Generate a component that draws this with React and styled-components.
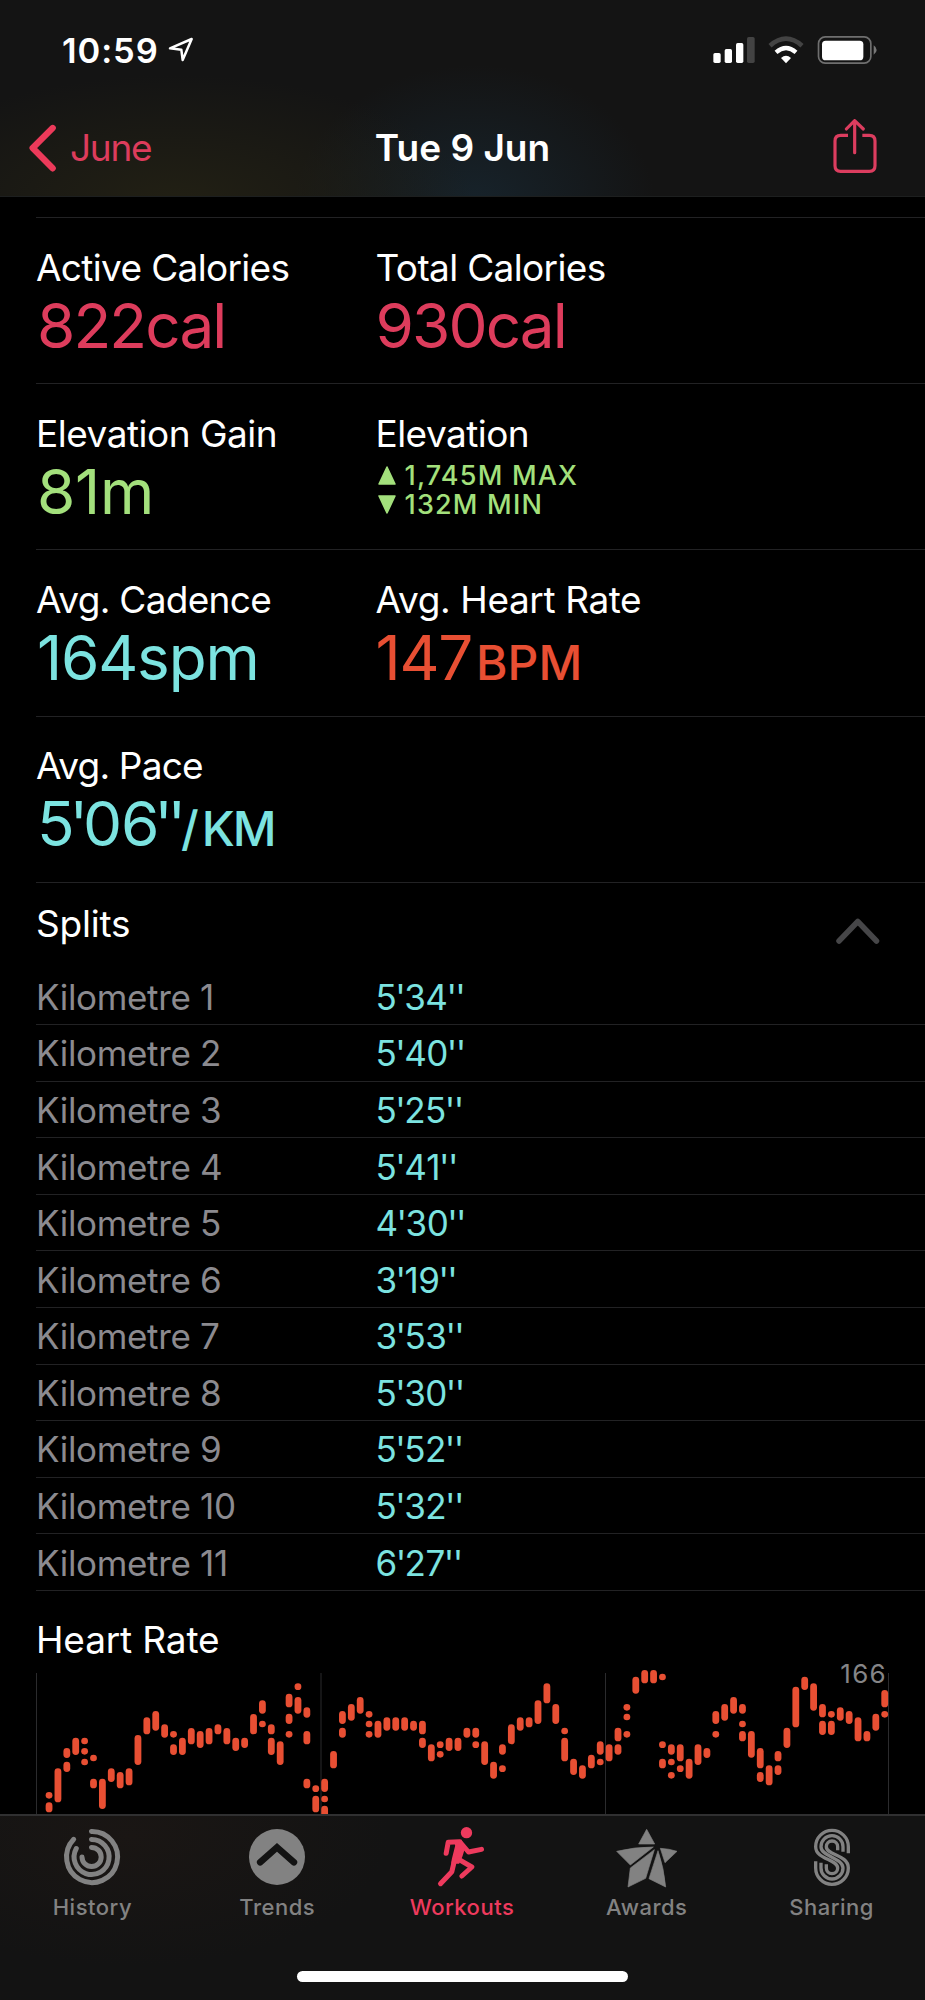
import React from "react";
import styled, { createGlobalStyle } from "styled-components";

const color = {
  pink: "#dd3c5c",
  pinkStrong: "#ee3a5d",
  green: "#a3e07c",
  teal: "#7ce3e0",
  orange: "#e84f33",
  muted: "#8b8a8f",
  line: "#222224",
  tab: "#828282",
};

const GlobalStyle = createGlobalStyle`
  * { box-sizing: border-box; }
  html, body { margin: 0; background: #000; }
  svg { display: block; overflow: visible; flex: none; }
`;

const Screen = styled.div`
  width: 925px;
  height: 2000px;
  display: flex;
  flex-direction: column;
  overflow: hidden;
  background: #000;
  color: #fff;
  font-family: Inter, "Liberation Sans", sans-serif;
`;

const Header = styled.header`
  height: 197px;
  flex: none;
  padding-top: 30px;
  border-bottom: 1px solid #1d1f1f;
  background:
    radial-gradient(ellipse 300px 130px at 175px 205px, #222014 0%, rgba(34, 32, 20, 0) 100%),
    radial-gradient(ellipse 180px 140px at 475px 205px, #17232b 0%, rgba(23, 35, 43, 0) 100%),
    #141414;
`;

const StatusBar = styled.div`
  display: flex;
  align-items: center;
  height: 40px;
  padding: 0 46px 0 62px;
`;

const Clock = styled.span`
  display: flex;
  align-items: center;
  gap: 9px;
  margin-right: auto;
  font-size: 34.5px;
  font-weight: 600;
  line-height: 41px;
  letter-spacing: 0.9px;
`;

const NavBar = styled.nav`
  display: grid;
  grid-template-columns: 1fr auto 1fr;
  align-items: center;
  height: 56px;
  margin-top: 49.5px;
`;

const BackLink = styled.a`
  display: flex;
  align-items: center;
  gap: 12px;
  margin: 0 auto 0 28px;
  color: ${color.pink};
  font-size: 37px;
  line-height: 44px;
  letter-spacing: -1.3px;
`;

const NavTitle = styled.h1`
  margin: 0;
  font-size: 37px;
  font-weight: 600;
  line-height: 44px;
`;

const ShareSlot = styled.div`
  justify-self: end;
  margin: -3px 48px 0 0;
`;

const Content = styled.main`
  flex: 1;
  min-height: 0;
  padding-top: 20px;
`;

const StatRow = styled.section`
  display: grid;
  grid-template-columns: 339.5px 1fr;
  height: 166.2px;
  margin-left: 36px;
  padding-top: 27.5px;
  border-top: 1px solid ${color.line};
`;

const Label = styled.div`
  font-size: 37px;
  line-height: 44px;
  white-space: nowrap;
  letter-spacing: ${(p) => p.$track || 0}px;
`;

const Value = styled.div`
  padding-left: ${(p) => p.$inset || 0}px;
  color: ${(p) => p.$color};
  font-size: 62px;
  line-height: 71px;
  white-space: nowrap;
  letter-spacing: ${(p) => p.$track || 0}px;
`;

const Unit = styled.span`
  font-size: 48px;
  font-weight: 500;
  margin-left: ${(p) => p.$gap || 0}px;
  letter-spacing: ${(p) => p.$track || 0}px;
`;

const Marked = styled.span`
  letter-spacing: -${(p) => p.$tight}em;
`;

const ElevationList = styled.div`
  padding: 5px 0 0 2px;
  color: ${color.green};
`;

const ElevationLine = styled.div`
  display: flex;
  align-items: center;
  gap: 9px;
  font-size: 27px;
  font-weight: 500;
  line-height: 29px;
  letter-spacing: 1.2px;
`;

const SplitsHeader = styled.div`
  display: flex;
  justify-content: space-between;
  height: 86.6px;
  margin-left: 36px;
  padding: 19.5px 45px 0 0;
  border-top: 1px solid ${color.line};
`;

const ChevronSlot = styled.div`
  padding-top: 14.5px;
`;

const SplitRow = styled.div`
  display: grid;
  grid-template-columns: 339.5px 1fr;
  height: 56.6px;
  margin-left: 36px;
  padding-top: 6.4px;
  border-bottom: 1px solid ${color.line};
  font-size: 35px;
  line-height: 44px;
  white-space: nowrap;
`;

const SplitName = styled.span`
  color: ${color.muted};
  letter-spacing: -0.33px;
`;

const SplitTime = styled.span`
  color: ${color.teal};
  letter-spacing: -0.4px;
`;

const HeartHeading = styled.div`
  height: 70.5px;
  padding: 27px 0 0 36px;
`;

const TabBar = styled.footer`
  position: relative;
  flex: none;
  height: 186px;
  display: grid;
  grid-template-columns: repeat(5, 184.8px);
  padding-top: 11px;
  border-top: 2px solid #303031;
  background:
    radial-gradient(ellipse 260px 130px at 130px 20px, #1a1614 0%, rgba(26, 22, 20, 0) 100%),
    #131313;
`;

const Tab = styled.a`
  display: flex;
  flex-direction: column;
  align-items: center;
  gap: 6px;
  color: ${(p) => (p.$active ? color.pinkStrong : color.tab)};
  font-size: 22px;
  font-weight: 500;
  line-height: 28px;
  letter-spacing: 0.5px;
`;

const HomeIndicator = styled.div`
  position: absolute;
  left: 297px;
  bottom: 18px;
  width: 331px;
  height: 11px;
  border-radius: 6px;
  background: #fff;
`;

const LocationArrow = () => (
  <svg width="26" height="26" viewBox="502 114 78 78">
    <path d="M508 148 L573 120 L546 183 L542 152 Z" fill="none" stroke="#fff" strokeWidth="7.5" strokeLinejoin="round" />
  </svg>
);

const StatusIcons = () => (
  <svg width="166.7" height="30" viewBox="750 105 500 90">
    <g fill="#fff">
      <rect x="754" y="159" width="22" height="30" rx="5" />
      <rect x="788" y="147" width="22" height="42" rx="5" />
      <rect x="822" y="129" width="22" height="60" rx="5" />
      <rect x="855" y="111" width="23" height="78" rx="5" fill="#434343" />
      <path d="M972 190 L957 174 Q972 160 987 174 Z" />
    </g>
    <path d="M942 157 Q972 131 1002 157" fill="none" stroke="#fff" strokeWidth="13" />
    <path d="M924 137 Q972 95 1020 137" fill="none" stroke="#434343" strokeWidth="14" />
    <rect x="1069.500" y="110.500" width="157" height="79" rx="20" fill="none" stroke="#6f6f6f" strokeWidth="5" />
    <rect x="1080" y="122" width="124" height="59" rx="11" fill="#fff" />
    <path d="M1235 136 Q1244 142 1244 150 Q1244 158 1235 164 Z" fill="#777" />
  </svg>
);

const BackChevron = () => (
  <svg width="30" height="48" viewBox="84 371 90 144">
    <path d="M158 383 L98 443 L158 504" fill="none" stroke="#ec3a5a" strokeWidth="19" strokeLinecap="round" strokeLinejoin="round" />
  </svg>
);

const ShareIcon = () => (
  <svg width="44" height="56" viewBox="1112 354 132 168">
    <g fill="none" stroke="#dc3d5f" strokeWidth="9.500" strokeLinecap="round" strokeLinejoin="round">
      <path d="M1177 362 V458 M1152 387 L1177 362 L1203 387" />
      <path strokeLinecap="butt" d="M1157 406 H1135 Q1118 406 1118 423 V497 Q1118 514 1135 514 H1221 Q1238 514 1238 497 V423 Q1238 406 1221 406 H1200" />
    </g>
  </svg>
);

const CollapseChevron = () => (
  <svg width="44" height="28" viewBox="836 917 44 28">
    <path d="M839 941 L857.800 921.500 L876.500 941" fill="none" stroke="#464648" strokeWidth="5.500" strokeLinecap="round" strokeLinejoin="round" />
  </svg>
);

const Triangle = ({ down }) => (
  <svg width="18" height="19" viewBox="0 0 18 19">
    <path d={down ? "M1 1 H17 L9 18 Z" : "M9 1 L17 18 H1 Z"} fill={color.green} stroke={color.green} strokeWidth="1.500" strokeLinejoin="round" />
  </svg>
);

const HistoryIcon = () => (
  <svg width="64" height="60" viewBox="60 1827 64 60">
    <g fill="none" stroke="currentColor" strokeWidth="5" strokeLinecap="round">
      <path d="M91.500 1831.500 A25.500 25.500 0 1 1 73.700 1839.300" />
      <path d="M91.500 1839.500 A17.500 17.500 0 1 1 76.300 1848.500" />
      <path d="M91.500 1847.400 A9.600 9.600 0 1 1 82 1857" />
    </g>
  </svg>
);

const TrendsIcon = () => (
  <svg width="64" height="60" viewBox="245.300 1827 64 60">
    <circle cx="277.300" cy="1857" r="28" fill="currentColor" />
    <path d="M260.500 1862.300 L277.300 1847.300 L294.200 1862.300" fill="none" stroke="#131313" strokeWidth="6.600" strokeLinecap="round" />
  </svg>
);

const RunnerIcon = () => (
  <svg width="64" height="60" viewBox="16.500 36 192 180">
    <circle cx="126" cy="53" r="17" fill="currentColor" />
    <path d="M88 75 L110 75 L122 98 L114 124 L104 146 L80 146 L82 132 L92 92 Z" fill="currentColor" />
    <g fill="none" stroke="currentColor" strokeWidth="15" strokeLinecap="round" strokeLinejoin="round">
      <path d="M65 115 L71 82 L106 80" />
      <path d="M109 84 L132 111 L171 103" />
      <path d="M90 136 L82 170 L48 206" />
      <path d="M104 134 L142 156 L112 183" />
    </g>
  </svg>
);

const AwardsIcon = () => (
  <svg width="64" height="60" viewBox="458 81 192 180">
    <g fill="currentColor" stroke="currentColor" strokeWidth="2" strokeLinejoin="round">
      <path d="M553 88 L577 132 L529 132 Z" />
      <path d="M463 154 Q515 141 573 141 L504 195 Z" />
      <path d="M576 149 L550 235 L497 261 L504 204 Z" />
      <path d="M587 152 Q605 205 610 261 L560 236 Z" />
      <path d="M594 145 Q620 146 644 154 L608 188 Z" />
    </g>
  </svg>
);

const SharingIcon = () => (
  <svg width="64" height="60" viewBox="1011 81 192 180">
    <g fill="none" stroke="currentColor" strokeWidth="10">
      <path d="M1156 160 V140 A49 49 0 0 0 1058 140 C1058 179 1124 177 1124 204 A17 17 0 0 1 1090 204 V193" />
      <path d="M1140 155 V140 A33 33 0 0 0 1074 140 C1074 170 1140 173 1140 204 A33 33 0 0 1 1074 204 V188" />
      <path d="M1124 151 V140 A17 17 0 0 0 1090 140 C1090 166 1156 164 1156 204 A49 49 0 0 1 1058 204 V184" />
    </g>
  </svg>
);

/* One entry per time slot; each slot holds [top, bottom] ranges in thirds of a pixel. */
const heartSamples = [
  [[516, 536], [547, 577]], [[445, 547]], [[384, 414], [425, 456]], [[353, 405]],
  [[353, 373], [384, 404], [416, 436]], [[404, 424], [476, 505]], [[476, 567]], [[445, 486]],
  [[456, 505]], [[445, 496]], [[345, 435]], [[292, 343]], [[273, 332]], [[313, 353]],
  [[333, 353], [373, 405]], [[353, 405]], [[324, 373]], [[333, 384]], [[324, 373]], [[313, 343]],
  [[324, 373]], [[353, 393]], [[353, 384]], [[282, 343]], [[241, 281], [302, 322]],
  [[313, 343], [353, 405]], [[364, 435]], [[221, 262], [281, 312], [333, 353]],
  [[190, 210], [231, 281]], [[262, 293], [333, 373], [476, 505]], [[496, 516], [527, 577]],
  [[476, 516], [527, 547], [557, 600]], [[393, 445]], [[273, 312], [323, 353]], [[252, 302]],
  [[231, 281]], [[273, 293], [302, 322], [333, 353]], [[302, 353]], [[292, 332]], [[292, 332]],
  [[292, 332]], [[302, 332]], [[302, 343], [353, 384]], [[373, 424]], [[364, 384], [393, 413]],
  [[353, 393]], [[353, 393]], [[323, 353]], [[323, 353], [364, 384]], [[364, 435]], [[425, 476]],
  [[373, 404], [436, 456]], [[313, 373]], [[292, 332]], [[292, 322]], [[241, 312]], [[190, 250]],
  [[252, 312]], [[323, 343], [353, 424]], [[416, 465]], [[436, 476]], [[404, 445]],
  [[364, 404], [416, 436]], [[373, 424]], [[323, 364], [373, 404]],
  [[252, 272], [281, 301], [333, 353]], [[170, 221]], [[150, 190]], [[150, 190]],
  [[161, 181], [364, 384], [416, 445]], [[373, 404], [416, 436], [456, 476]],
  [[373, 424], [436, 456]], [[416, 476]], [[373, 435]], [[384, 414]], [[273, 312], [333, 353]],
  [[252, 302]], [[231, 281]], [[252, 281], [302, 322], [333, 364]], [[333, 413]],
  [[384, 445], [456, 486]], [[436, 496]], [[393, 424], [436, 465]], [[323, 384]], [[200, 322]],
  [[170, 210]], [[190, 272]], [[252, 292], [302, 345]], [[273, 293], [302, 345]], [[262, 302]],
  [[273, 312]], [[292, 364]], [[333, 364]], [[281, 332]], [[210, 262], [273, 293]],
];

const HeartChart = () => (
  <svg width="925" height="153" viewBox="0 41 925 153">
    {[36.5, 321, 605.5, 888.5].map((x) => (
      <path key={x} d={`M${x} 53 V194`} stroke="#2b2b2d" strokeWidth="1" />
    ))}
    {heartSamples.flatMap((ranges, i) =>
      ranges.map(([top, bottom]) => (
        <rect
          key={`${i}-${top}`}
          x={49.05 + i * 8.89 - 3.4}
          y={top / 3}
          width="6.8"
          height={(bottom - top) / 3}
          rx="3.4"
          fill={color.orange}
        />
      ))
    )}
    <text x="887" y="62.500" textAnchor="end" fill="#858587" fontSize="26" letterSpacing="1.300">
      166
    </text>
  </svg>
);

/* Sets each minute and second mark closer to the digit before it. */
const Duration = ({ text, tight }) =>
  text.split(/(\d'+)/).map((part, i) =>
    part.includes("'") ? (
      <Marked key={i} $tight={tight}>
        {part}
      </Marked>
    ) : (
      part
    )
  );

const splits = [
  "5'34''", "5'40''", "5'25''", "5'41''", "4'30''", "3'19''",
  "3'53''", "5'30''", "5'52''", "5'32''", "6'27''",
];

const tabs = [
  { name: "History", Icon: HistoryIcon },
  { name: "Trends", Icon: TrendsIcon },
  { name: "Workouts", Icon: RunnerIcon, active: true },
  { name: "Awards", Icon: AwardsIcon },
  { name: "Sharing", Icon: SharingIcon },
];

export default function App() {
  return (
    <Screen>
      <GlobalStyle />
      <Header>
        <StatusBar>
          <Clock>
            10:59
            <LocationArrow />
          </Clock>
          <StatusIcons />
        </StatusBar>
        <NavBar>
          <BackLink>
            <BackChevron />
            June
          </BackLink>
          <NavTitle>Tue 9 Jun</NavTitle>
          <ShareSlot>
            <ShareIcon />
          </ShareSlot>
        </NavBar>
      </Header>

      <Content>
        <StatRow>
          <div>
            <Label $track={-0.66}>Active Calories</Label>
            <Value $color={color.pink} $inset={1} $track={-1.9}>822cal</Value>
          </div>
          <div>
            <Label $track={-0.65}>Total Calories</Label>
            <Value $color={color.pink} $track={-1.9}>930cal</Value>
          </div>
        </StatRow>
        <StatRow>
          <div>
            <Label $track={-0.5}>Elevation Gain</Label>
            <Value $color={color.green} $inset={1} $track={-0.3}>81m</Value>
          </div>
          <div>
            <Label $track={-0.55}>Elevation</Label>
            <ElevationList>
              <ElevationLine>
                <Triangle />
                1,745M MAX
              </ElevationLine>
              <ElevationLine>
                <Triangle down />
                132M MIN
              </ElevationLine>
            </ElevationList>
          </div>
        </StatRow>
        <StatRow>
          <div>
            <Label $track={-0.7}>Avg. Cadence</Label>
            <Value $color={color.teal} $inset={1} $track={-1.2}>164spm</Value>
          </div>
          <div>
            <Label $track={-0.4}>Avg. Heart Rate</Label>
            <Value $color={color.orange} $track={-1.3}>
              147<Unit $gap={4} $track={0.1}>BPM</Unit>
            </Value>
          </div>
        </StatRow>
        <StatRow>
          <div>
            <Label $track={-0.8}>Avg. Pace</Label>
            <Value $color={color.teal} $inset={1} $track={-1}>
              <Duration text="5'06''" tight={0.084} />
              <Unit>/</Unit>
              <Unit $gap={3} $track={-2}>KM</Unit>
            </Value>
          </div>
        </StatRow>

        <SplitsHeader>
          <Label $track={-0.2}>Splits</Label>
          <ChevronSlot>
            <CollapseChevron />
          </ChevronSlot>
        </SplitsHeader>
        {splits.map((time, i) => (
          <SplitRow key={i}>
            <SplitName>Kilometre {i + 1}</SplitName>
            <SplitTime>
              <Duration text={time} tight={0.045} />
            </SplitTime>
          </SplitRow>
        ))}

        <HeartHeading>
          <Label $track={-0.15}>Heart Rate</Label>
        </HeartHeading>
        <HeartChart />
      </Content>

      <TabBar>
        {tabs.map(({ name, Icon, active }) => (
          <Tab key={name} $active={active}>
            <Icon />
            {name}
          </Tab>
        ))}
        <HomeIndicator />
      </TabBar>
    </Screen>
  );
}
